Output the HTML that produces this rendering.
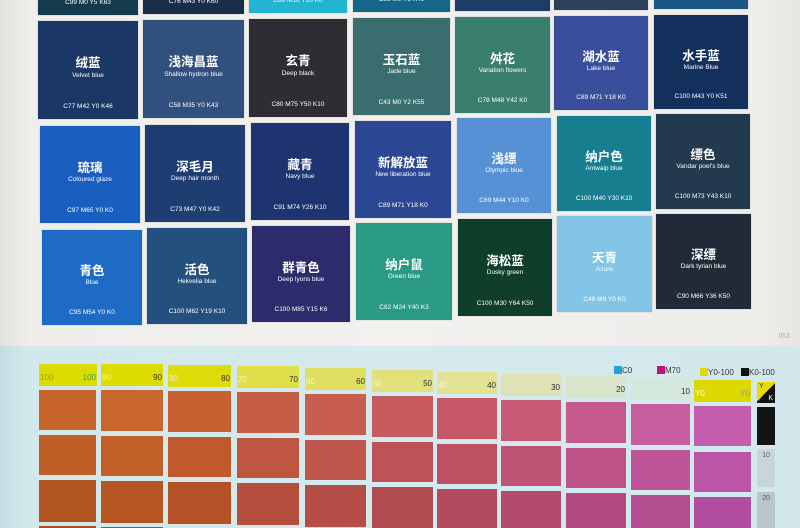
<!DOCTYPE html>
<html style="width:800px;height:528px;overflow:hidden"><head><meta charset="utf-8"><style>
*{margin:0;padding:0;box-sizing:border-box}
html,body{overflow:hidden}
body{width:800px;height:528px;overflow:hidden;position:relative;background:#e9e8e5;font-family:"Liberation Sans","Noto Sans CJK SC",sans-serif}
.top{position:absolute;left:0;top:0;width:800px;height:346px;background:linear-gradient(90deg,#e2e1de 0,#efeeeb 30px,#f2f1ee 400px,#eeedea 760px,#e6e5e2 800px)}
.s{position:absolute;color:#fff;text-align:center;box-shadow:0 0 1px rgba(0,0,0,.3)}
.s b{position:absolute;left:0;right:0;top:36%;font-size:12.5px;font-weight:bold;line-height:14px}
.s i{position:absolute;left:0;right:0;top:52%;font-size:6.5px;font-style:normal;line-height:8px}
.s u{position:absolute;left:0;right:0;bottom:8px;font-size:6.5px;text-decoration:none;line-height:8px}
.bot{position:absolute;left:0;top:346px;width:800px;height:182px;background:linear-gradient(90deg,#c4dde2 0,#d2e8ec 25px,#d4eaee 400px,#d2e8ec 800px)}
.h{position:absolute;height:22px;font-size:8px;color:#333}
.h span{position:absolute;right:1px;bottom:4px}
.h em{position:absolute;left:1px;bottom:4px;font-style:normal;color:#fff;opacity:.7}
.c{position:absolute}
.lg{position:absolute;font-size:8px;color:#333;top:366px}
.lg i{display:inline-block;width:8px;height:8px;vertical-align:-1px}
</style></head><body>
<div class="top">
<div class="s" style="left:38px;top:-84px;width:100px;height:99px;background:#143a4e"><u>C99 M0 Y5 K63</u></div>
<div class="s" style="left:143px;top:-85px;width:101px;height:99px;background:#1b2d4b"><u>C76 M43 Y0 K60</u></div>
<div class="s" style="left:249px;top:-86px;width:98px;height:99px;background:#22b4d0"><u>C80 M10 Y20 K0</u></div>
<div class="s" style="left:353px;top:-87px;width:97px;height:99px;background:#14678a"><u>C95 M0 Y5 K49</u></div>
<div class="s" style="left:455px;top:-88px;width:95px;height:99px;background:#1d3d66"><u>C75 M34 Y0 K50</u></div>
<div class="s" style="left:554px;top:-89px;width:94px;height:99px;background:#2d4059"><u>C93 M73 Y37 K2</u></div>
<div class="s" style="left:654px;top:-90px;width:94px;height:99px;background:#195683"><u>C90 M40 Y10 K55</u></div>
<div class="s" style="left:38px;top:21px;width:100px;height:98px;background:#1b3766"><b>绒蓝</b><i>Velvet blue</i><u>C77 M42 Y0 K46</u></div>
<div class="s" style="left:143px;top:20px;width:101px;height:98px;background:#32507d"><b>浅海昌蓝</b><i>Shallow hydron blue</i><u>C58 M35 Y0 K43</u></div>
<div class="s" style="left:249px;top:19px;width:98px;height:98px;background:#2e2d33"><b>玄青</b><i>Deep black</i><u>C80 M75 Y50 K10</u></div>
<div class="s" style="left:353px;top:18px;width:97px;height:97px;background:#3a6e6e"><b>玉石蓝</b><i>Jade blue</i><u>C43 M0 Y2 K55</u></div>
<div class="s" style="left:455px;top:17px;width:95px;height:96px;background:#3a7e6d"><b>舛花</b><i>Variation flowers</i><u>C78 M48 Y42 K0</u></div>
<div class="s" style="left:554px;top:16px;width:94px;height:94px;background:#3a4f9b"><b>湖水蓝</b><i>Lake blue</i><u>C89 M71 Y18 K0</u></div>
<div class="s" style="left:654px;top:15px;width:94px;height:94px;background:#13305d"><b>水手蓝</b><i>Marine Blue</i><u>C100 M43 Y0 K51</u></div>
<div class="s" style="left:40px;top:126px;width:100px;height:97px;background:#1a5ec0"><b>琉璃</b><i>Coloured glaze</i><u>C97 M65 Y0 K0</u></div>
<div class="s" style="left:145px;top:125px;width:100px;height:97px;background:#1d3d73"><b>深毛月</b><i>Deep hair month</i><u>C73 M47 Y0 K42</u></div>
<div class="s" style="left:251px;top:123px;width:98px;height:97px;background:#1d3470"><b>藏青</b><i>Navy blue</i><u>C91 M74 Y26 K10</u></div>
<div class="s" style="left:355px;top:121px;width:96px;height:97px;background:#2c4895"><b>新解放蓝</b><i>New liberation blue</i><u>C89 M71 Y18 K0</u></div>
<div class="s" style="left:457px;top:118px;width:94px;height:95px;background:#5691d5"><b>浅缥</b><i>Olympic blue</i><u>C69 M44 Y10 K0</u></div>
<div class="s" style="left:557px;top:116px;width:94px;height:95px;background:#177e90"><b>纳户色</b><i>Antwaip blue</i><u>C100 M40 Y30 K10</u></div>
<div class="s" style="left:656px;top:114px;width:94px;height:95px;background:#22394e"><b>缥色</b><i>Vandar poel's blue</i><u>C100 M73 Y43 K10</u></div>
<div class="s" style="left:42px;top:230px;width:100px;height:95px;background:#1e6bc6"><b>青色</b><i>Blue</i><u>C95 M54 Y0 K0</u></div>
<div class="s" style="left:147px;top:228px;width:100px;height:96px;background:#23507f"><b>活色</b><i>Hekvelia blue</i><u>C100 M62 Y19 K10</u></div>
<div class="s" style="left:252px;top:226px;width:98px;height:96px;background:#2c2c6d"><b>群青色</b><i>Deep lyons blue</i><u>C100 M85 Y15 K6</u></div>
<div class="s" style="left:356px;top:223px;width:96px;height:97px;background:#2a9a84"><b>纳户鼠</b><i>Green blue</i><u>C82 M24 Y40 K3</u></div>
<div class="s" style="left:458px;top:219px;width:94px;height:97px;background:#0f3f2b"><b>海松蓝</b><i>Dusky green</i><u>C100 M30 Y64 K50</u></div>
<div class="s" style="left:557px;top:216px;width:95px;height:96px;background:#82c5e7"><b>天青</b><i>Azure</i><u>C48 M8 Y0 K0</u></div>
<div class="s" style="left:656px;top:214px;width:95px;height:95px;background:#232a37"><b>深缥</b><i>Dark tyrian blue</i><u>C90 M66 Y36 K50</u></div>
<div style="position:absolute;left:779px;top:332px;font-size:7px;color:#999;font-family:'Liberation Serif',serif">053</div>
</div>
<div class="bot" style="height:200px"></div>
<div class="lg" style="left:614px"><i style="background:#1ea3dd"></i>C0</div>
<div class="lg" style="left:657px"><i style="background:#c0157a"></i>M70</div>
<div class="lg" style="left:700px;top:368px"><i style="background:#e0d800"></i>Y0-100</div>
<div class="lg" style="left:741px;top:368px"><i style="background:#111"></i>K0-100</div>
<div class="h" style="left:39px;top:364px;width:58px;background:#dcdc00"><em style="color:#a90;opacity:1">100</em><span style="color:#3a9a6a">100</span></div>
<div class="h" style="left:101px;top:364px;width:62px;background:#dcdc00"><em>90</em><span>90</span></div>
<div class="h" style="left:168px;top:365px;width:63px;background:#dcdc08"><em>80</em><span>80</span></div>
<div class="h" style="left:237px;top:366px;width:62px;background:#e0df4a"><em>70</em><span>70</span></div>
<div class="h" style="left:305px;top:368px;width:61px;background:#e0df62"><em>60</em><span>60</span></div>
<div class="h" style="left:372px;top:370px;width:61px;background:#e1e07a"><em>50</em><span>50</span></div>
<div class="h" style="left:437px;top:372px;width:60px;background:#e2e294"><em>40</em><span>40</span></div>
<div class="h" style="left:501px;top:374px;width:60px;background:#dfe2b4"><span>30</span></div>
<div class="h" style="left:566px;top:376px;width:60px;background:#d9e4ca"><span>20</span></div>
<div class="h" style="left:631px;top:378px;width:60px;background:#d4e7dc"><span>10</span></div>
<div class="h" style="left:694px;top:380px;width:57px;background:#dcd800"><em style="opacity:1">Y0</em><span style="color:#998">Y0</span></div>
<div class="c" style="left:757px;top:382px;width:18px;height:21px;background:linear-gradient(135deg,#e6dc00 50%,#111 50%)"><span style="position:absolute;left:2px;top:1px;font-size:7px;color:#333">Y</span><span style="position:absolute;right:2px;bottom:1px;font-size:7px;color:#fff">K</span></div>
<div class="c" style="left:757px;top:407px;width:18px;height:38px;background:#141414"></div>
<div class="c" style="left:757px;top:449px;width:18px;height:38px;background:#c8d6d9;font-size:7px;color:#555;text-align:center;padding-top:3px">10</div>
<div class="c" style="left:757px;top:492px;width:18px;height:36px;background:#b8c6c9;font-size:7px;color:#555;text-align:center;padding-top:3px">20</div>
<div class="c" style="left:39px;top:390px;width:57px;height:40px;background:#c7652b"></div>
<div class="c" style="left:101px;top:390px;width:62px;height:41px;background:#c9662b"></div>
<div class="c" style="left:168px;top:391px;width:63px;height:41px;background:#c9602f"></div>
<div class="c" style="left:237px;top:392px;width:62px;height:41px;background:#c85d45"></div>
<div class="c" style="left:305px;top:394px;width:61px;height:41px;background:#c85e50"></div>
<div class="c" style="left:372px;top:396px;width:61px;height:41px;background:#c65a5c"></div>
<div class="c" style="left:437px;top:398px;width:60px;height:41px;background:#c65867"></div>
<div class="c" style="left:501px;top:400px;width:60px;height:41px;background:#c85a78"></div>
<div class="c" style="left:566px;top:402px;width:60px;height:41px;background:#c75a8c"></div>
<div class="c" style="left:631px;top:404px;width:59px;height:41px;background:#c75c9f"></div>
<div class="c" style="left:694px;top:406px;width:57px;height:40px;background:#c45dae"></div>
<div class="c" style="left:39px;top:435px;width:57px;height:40px;background:#bf5e26"></div>
<div class="c" style="left:101px;top:436px;width:62px;height:40px;background:#c15f28"></div>
<div class="c" style="left:168px;top:437px;width:63px;height:40px;background:#c05a2c"></div>
<div class="c" style="left:237px;top:438px;width:62px;height:40px;background:#bf5642"></div>
<div class="c" style="left:305px;top:440px;width:61px;height:40px;background:#bf564b"></div>
<div class="c" style="left:372px;top:442px;width:61px;height:40px;background:#bd5358"></div>
<div class="c" style="left:437px;top:444px;width:60px;height:40px;background:#bd5163"></div>
<div class="c" style="left:501px;top:446px;width:60px;height:40px;background:#be5374"></div>
<div class="c" style="left:566px;top:448px;width:60px;height:40px;background:#bd5287"></div>
<div class="c" style="left:631px;top:450px;width:59px;height:40px;background:#bd5598"></div>
<div class="c" style="left:694px;top:452px;width:57px;height:40px;background:#bb55a6"></div>
<div class="c" style="left:39px;top:480px;width:57px;height:42px;background:#b35521"></div>
<div class="c" style="left:101px;top:481px;width:62px;height:42px;background:#b55623"></div>
<div class="c" style="left:168px;top:482px;width:63px;height:42px;background:#b45127"></div>
<div class="c" style="left:237px;top:483px;width:62px;height:42px;background:#b34d3c"></div>
<div class="c" style="left:305px;top:485px;width:61px;height:42px;background:#b34d45"></div>
<div class="c" style="left:372px;top:487px;width:61px;height:41px;background:#b24a52"></div>
<div class="c" style="left:437px;top:489px;width:60px;height:39px;background:#b2495d"></div>
<div class="c" style="left:501px;top:491px;width:60px;height:37px;background:#b34b6d"></div>
<div class="c" style="left:566px;top:493px;width:60px;height:35px;background:#b34a80"></div>
<div class="c" style="left:631px;top:495px;width:59px;height:33px;background:#b34d90"></div>
<div class="c" style="left:694px;top:497px;width:57px;height:31px;background:#b04d9e"></div>
<div class="c" style="left:39px;top:526px;width:57px;height:2px;background:#a84e1e"></div>
<div class="c" style="left:101px;top:527px;width:62px;height:1px;background:#aa4f20"></div>
</body></html>
